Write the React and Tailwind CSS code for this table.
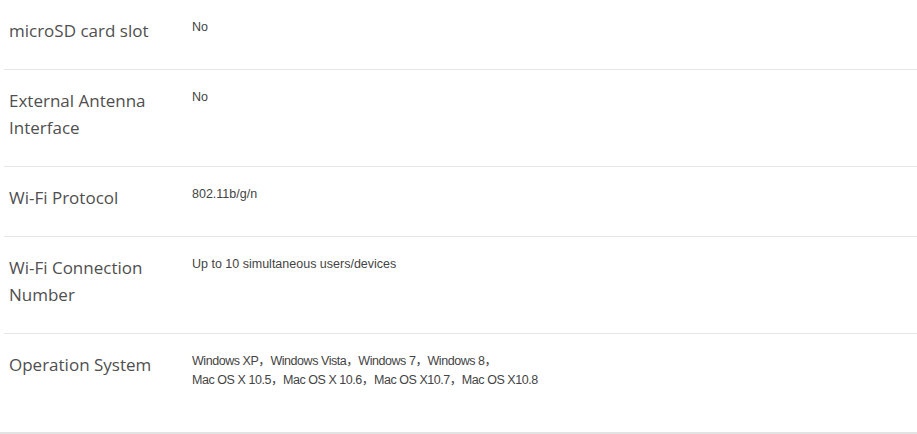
import React from 'react'

export default function App() {
  // spec rows shown in the table
  const specs = [
    { label: ['microSD card slot'], value: ['No'] },
    { label: ['External Antenna', 'Interface'], value: ['No'] },
    { label: ['Wi-Fi Protocol'], value: ['802.11b/g/n'] },
    { label: ['Wi-Fi Connection', 'Number'], value: ['Up to 10 simultaneous users/devices'] },
    {
      label: ['Operation System'],
      value: [
        'Windows XP，Windows Vista，Windows 7，Windows 8，',
        'Mac OS X 10.5，Mac OS X 10.6，Mac OS X10.7，Mac OS X10.8'
      ],
      last: true
    }
  ]

  return (
    <div className="w-[917px] h-[434px] bg-white overflow-hidden">
      <div className="pl-[4px]">
        {specs.map((row, i) => (
          <div
            key={i}
            className={
              'flex pt-[17px] ' +
              (row.last ? 'h-[98px]' : 'pb-[25px] border-b border-[#e6e6e6]')
            }
          >
            <div className="w-[188px] shrink-0 pl-[5px] text-[17px] leading-[27px] text-[#4f4f4f] font-['Open_Sans',sans-serif]">
              {row.label.map((l, j) => (
                <div key={j}>{l}</div>
              ))}
            </div>
            <div className="pt-px text-[12.5px] leading-[19px] text-[#444] font-['Liberation_Sans','Noto_Sans_CJK_SC',sans-serif]">
              {row.value.map((v, j) => (
                <div key={j} className={row.last ? 'tracking-[-0.45px]' : ''}>{v}</div>
              ))}
            </div>
          </div>
        ))}
      </div>
      <div className="h-[2px] bg-[#e3e3e3]" />
    </div>
  )
}
